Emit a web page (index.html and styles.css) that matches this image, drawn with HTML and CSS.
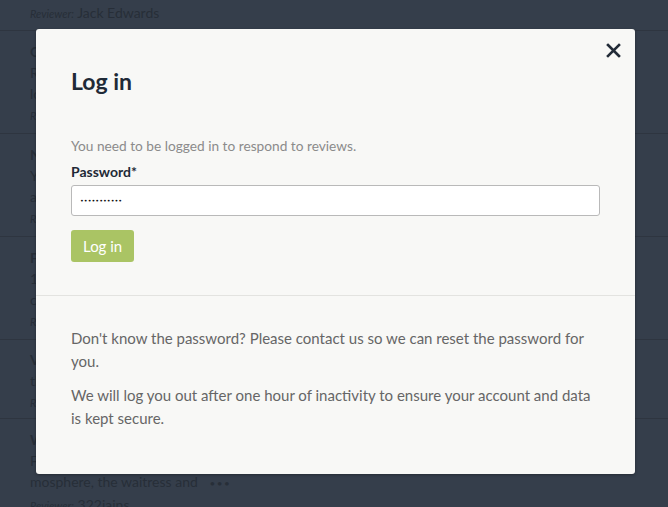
FILE: index.html
```html
<!DOCTYPE html>
<html lang="en">
<head>
<meta charset="utf-8">
<title>Log in</title>
<link rel="stylesheet" href="styles.css">
</head>
<body>
<div class="page">
  <div class="reviews">
    <div class="review first">
      <div class="line split"><span>quality was good, not big enough</span><span class="dots">•••</span></div>
      <div class="line"><span class="rev-label">Reviewer:</span> <span class="rev-name">Jack Edwards</span></div>
    </div>
    <div class="review">
      <div class="line title">Great evening out</div>
      <div class="line">Really nice service and the food was</div>
      <div class="line">lovely, will come again</div>
      <div class="line"><span class="rev-label">Reviewer:</span> <span class="rev-name">sam_k</span></div>
    </div>
    <div class="review">
      <div class="line title">Not bad at all</div>
      <div class="line">Yummy starters but the mains took</div>
      <div class="line">a while to arrive</div>
      <div class="line"><span class="rev-label">Reviewer:</span> <span class="rev-name">helen</span></div>
    </div>
    <div class="review">
      <div class="line title">Fantastic</div>
      <div class="line">10 out of 10 for the desserts and the</div>
      <div class="line">cocktails</div>
      <div class="line"><span class="rev-label">Reviewer:</span> <span class="rev-name">mike</span></div>
    </div>
    <div class="review short">
      <div class="line title">Very good</div>
      <div class="line">the staff were friendly</div>
      <div class="line"><span class="rev-label">Reviewer:</span> <span class="rev-name">anna</span></div>
    </div>
    <div class="review">
      <div class="line title">Wonderful</div>
      <div class="line">Fabulous food and a really relaxed at-</div>
      <div class="line">mosphere, the waitress and <span class="dots inline">•••</span></div>
      <div class="line"><span class="rev-label">Reviewer:</span> <span class="rev-name">322iains</span></div>
    </div>
  </div>

  <div class="modal" role="dialog" aria-labelledby="modal-title">
    <button class="close" type="button" aria-label="Close">
      <svg width="15" height="15" viewBox="0 0 15 15" aria-hidden="true">
        <path d="M2 2 L13 13 M13 2 L2 13" stroke="#232c38" stroke-width="2.6" stroke-linecap="square" fill="none"/>
      </svg>
    </button>
    <div class="modal-body">
      <h2 class="modal-title" id="modal-title">Log in</h2>
      <p class="intro">You need to be logged in to respond to reviews.</p>
      <label class="field-label" for="pw">Password*</label>
      <input class="field" id="pw" type="password" value="abcdefghijk">
      <button class="btn" type="button">Log in</button>
    </div>
    <div class="modal-footer">
      <p>Don't know the password? Please contact us so we can reset the password for you.</p>
      <p>We will log you out after one hour of inactivity to ensure your account and data is kept secure.</p>
    </div>
  </div>
</div>
</body>
</html>
```
FILE: styles.css
```css
html, body {
  margin: 0;
  padding: 0;
}
body {
  background: #353e4b;
  font-family: "Lato", "Open Sans", sans-serif;
  overflow: hidden;
}
.page {
  position: relative;
  width: 668px;
  height: 507px;
  overflow: hidden;
}
.reviews {
  margin-top: -19px;
}
.review {
  padding: 10px 0 7px 30px;
  border-bottom: 1px solid #2e3540;
  color: #272e38;
  font-size: 14px;
}
.review.first {
  padding-top: 0;
  padding-bottom: 6px;
}
.review.short {
  padding-top: 9px;
  padding-bottom: 5px;
}
.line {
  line-height: 21px;
  white-space: nowrap;
}
.line.split {
  display: flex;
  justify-content: space-between;
  padding-right: 85px;
}
.title {
  font-weight: 700;
}
.rev-label {
  font-style: italic;
  font-size: 11px;
}
.rev-name {
  font-size: 14px;
}
.dots {
  font-size: 10px;
  letter-spacing: 1.5px;
}
.dots.inline {
  margin-left: 8px;
}

.modal {
  position: absolute;
  left: 36px;
  top: 29px;
  width: 599px;
  height: 445px;
  background: #f8f8f6;
  border-radius: 3px;
  box-shadow: 0 1px 3px rgba(0, 0, 0, 0.3);
  box-sizing: border-box;
}
.close {
  position: absolute;
  top: 14px;
  right: 14px;
  width: 15px;
  height: 15px;
  padding: 0;
  border: 0;
  background: none;
  cursor: pointer;
  display: block;
}
.close svg {
  display: block;
}
.modal-body {
  padding: 38px 35px 33px;
  border-bottom: 1px solid #e3e3e0;
  display: flex;
  flex-direction: column;
  align-items: flex-start;
}
.modal-title {
  margin: 0;
  font-size: 23px;
  line-height: 28px;
  font-weight: 700;
  color: #1f2a37;
}
.intro {
  margin: 41px 0 0;
  font-size: 13.7px;
  line-height: 20px;
  color: #8b8b8b;
}
.field-label {
  margin-top: 6px;
  font-size: 14px;
  line-height: 20px;
  font-weight: 700;
  color: #1f2a37;
}
.field {
  margin-top: 3px;
  width: 100%;
  height: 31px;
  box-sizing: border-box;
  border: 1px solid #b9b9b9;
  border-radius: 3px;
  background: #fff;
  padding: 0 8px;
  font-size: 6.5px;
  letter-spacing: 0;
  color: #111;
  font-family: "DejaVu Sans", sans-serif;
}
.btn {
  margin-top: 14px;
  height: 32px;
  padding: 0 12px;
  border: 0;
  border-radius: 3px;
  background: #aac464;
  color: #fff;
  font-family: "Lato", "Open Sans", sans-serif;
  font-size: 15px;
  cursor: pointer;
}
.modal-footer {
  padding: 31px 35px 0;
}
.modal-footer p {
  margin: 0 0 11px;
  font-size: 15px;
  line-height: 23px;
  color: #666666;
}
```
